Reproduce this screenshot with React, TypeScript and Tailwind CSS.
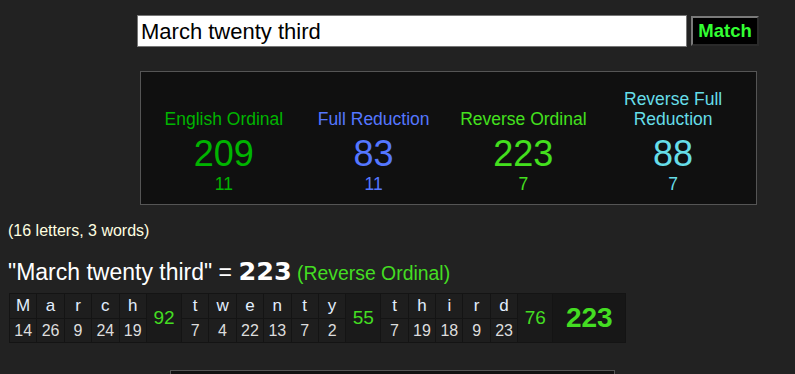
import React from 'react';

type Cipher = { name: string; value: number; reduced: number; color: string };

const ciphers: Cipher[] = [
  { name: 'English Ordinal', value: 209, reduced: 11, color: 'text-[#00b400]' },
  { name: 'Full Reduction', value: 83, reduced: 11, color: 'text-[#5577ff]' },
  { name: 'Reverse Ordinal', value: 223, reduced: 7, color: 'text-[#44e01e]' },
  { name: 'Reverse Full Reduction', value: 88, reduced: 7, color: 'text-[#66dde8]' },
];

const words: { letters: [string, number][]; sum: number }[] = [
  { letters: [['M', 14], ['a', 26], ['r', 9], ['c', 24], ['h', 19]], sum: 92 },
  { letters: [['t', 7], ['w', 4], ['e', 22], ['n', 13], ['t', 7], ['y', 2]], sum: 55 },
  { letters: [['t', 7], ['h', 19], ['i', 18], ['r', 9], ['d', 23]], sum: 76 },
];

const App: React.FC = () => {
  return (
    <div className="min-h-screen bg-[#222222] font-['Liberation_Sans',Arial,sans-serif] text-white overflow-hidden">
      {/* search row */}
      <div className="flex items-start gap-[4px] pt-[15px] pl-[137px]">
        <input
          readOnly
          value="March twenty third"
          className="w-[550px] h-[32px] bg-white text-black text-[22px] px-[3px] border border-[#767676] outline-none"
        />
        <button className="mt-[1px] h-[30px] w-[68px] bg-black border-2 border-t-[#7a7a7a] border-l-[#7a7a7a] border-b-[#2a2a2a] border-r-[#2a2a2a] text-[#33ff33] font-bold text-[18.5px] leading-none">
          Match
        </button>
      </div>

      {/* results box */}
      <div className="ml-[140px] mt-[24px] w-[617px] h-[134px] bg-[#101010] border border-[#555555] px-[8px] pb-[10px] grid grid-cols-4 items-end">
        {ciphers.map((c) => (
          <div key={c.name} className={`flex flex-col items-center text-center ${c.color}`}>
            <div className="text-[17.5px] leading-[20px] mb-[5px] px-[10px]">{c.name}</div>
            <div className="text-[36px] leading-[40px]">{c.value}</div>
            <div className="text-[17.5px] leading-[20px]">{c.reduced}</div>
          </div>
        ))}
      </div>

      <div className="pl-[8px] mt-[17px] text-[16px] leading-[18px] text-[#ffffe0]">(16 letters, 3 words)</div>

      <div className="pl-[8px] mt-[17px] flex items-baseline leading-[28px]">
        <span className="text-[23px]">"March twenty third" =&nbsp;</span>
        <span className="font-['DejaVu_Sans',Verdana,sans-serif] font-bold text-[25.5px]">223</span>
        <span className="text-[19.4px] text-[#44dd22]">&nbsp;(Reverse Ordinal)</span>
      </div>

      {/* letter breakdown */}
      <div className="ml-[9px] mt-[6px] inline-flex gap-px bg-[#141414] border border-[#141414]">
        {words.map((w, i) => (
          <React.Fragment key={i}>
            {w.letters.map(([ch, n], j) => (
              <div key={j} className="flex flex-col gap-px w-[26.4px]">
                <div className="h-[24px] bg-[#1e1e1e] flex items-center justify-center text-[17px] text-[#e2efff]">{ch}</div>
                <div className="h-[23px] bg-[#1e1e1e] flex items-center justify-center text-[16px] text-[#dddddd]">{n}</div>
              </div>
            ))}
            <div className="w-[34px] bg-[#1a1a1a] flex items-center justify-center text-[19px] text-[#44dd22]">{w.sum}</div>
          </React.Fragment>
        ))}
        <div className="w-[72px] bg-[#171717] flex items-center justify-center text-[28px] font-bold text-[#44dd22]">223</div>
      </div>

      <div className="ml-[170px] mt-[27px] w-[445px] h-[40px] bg-[#111111] border border-[#555555]" />
    </div>
  );
};

export default App;
